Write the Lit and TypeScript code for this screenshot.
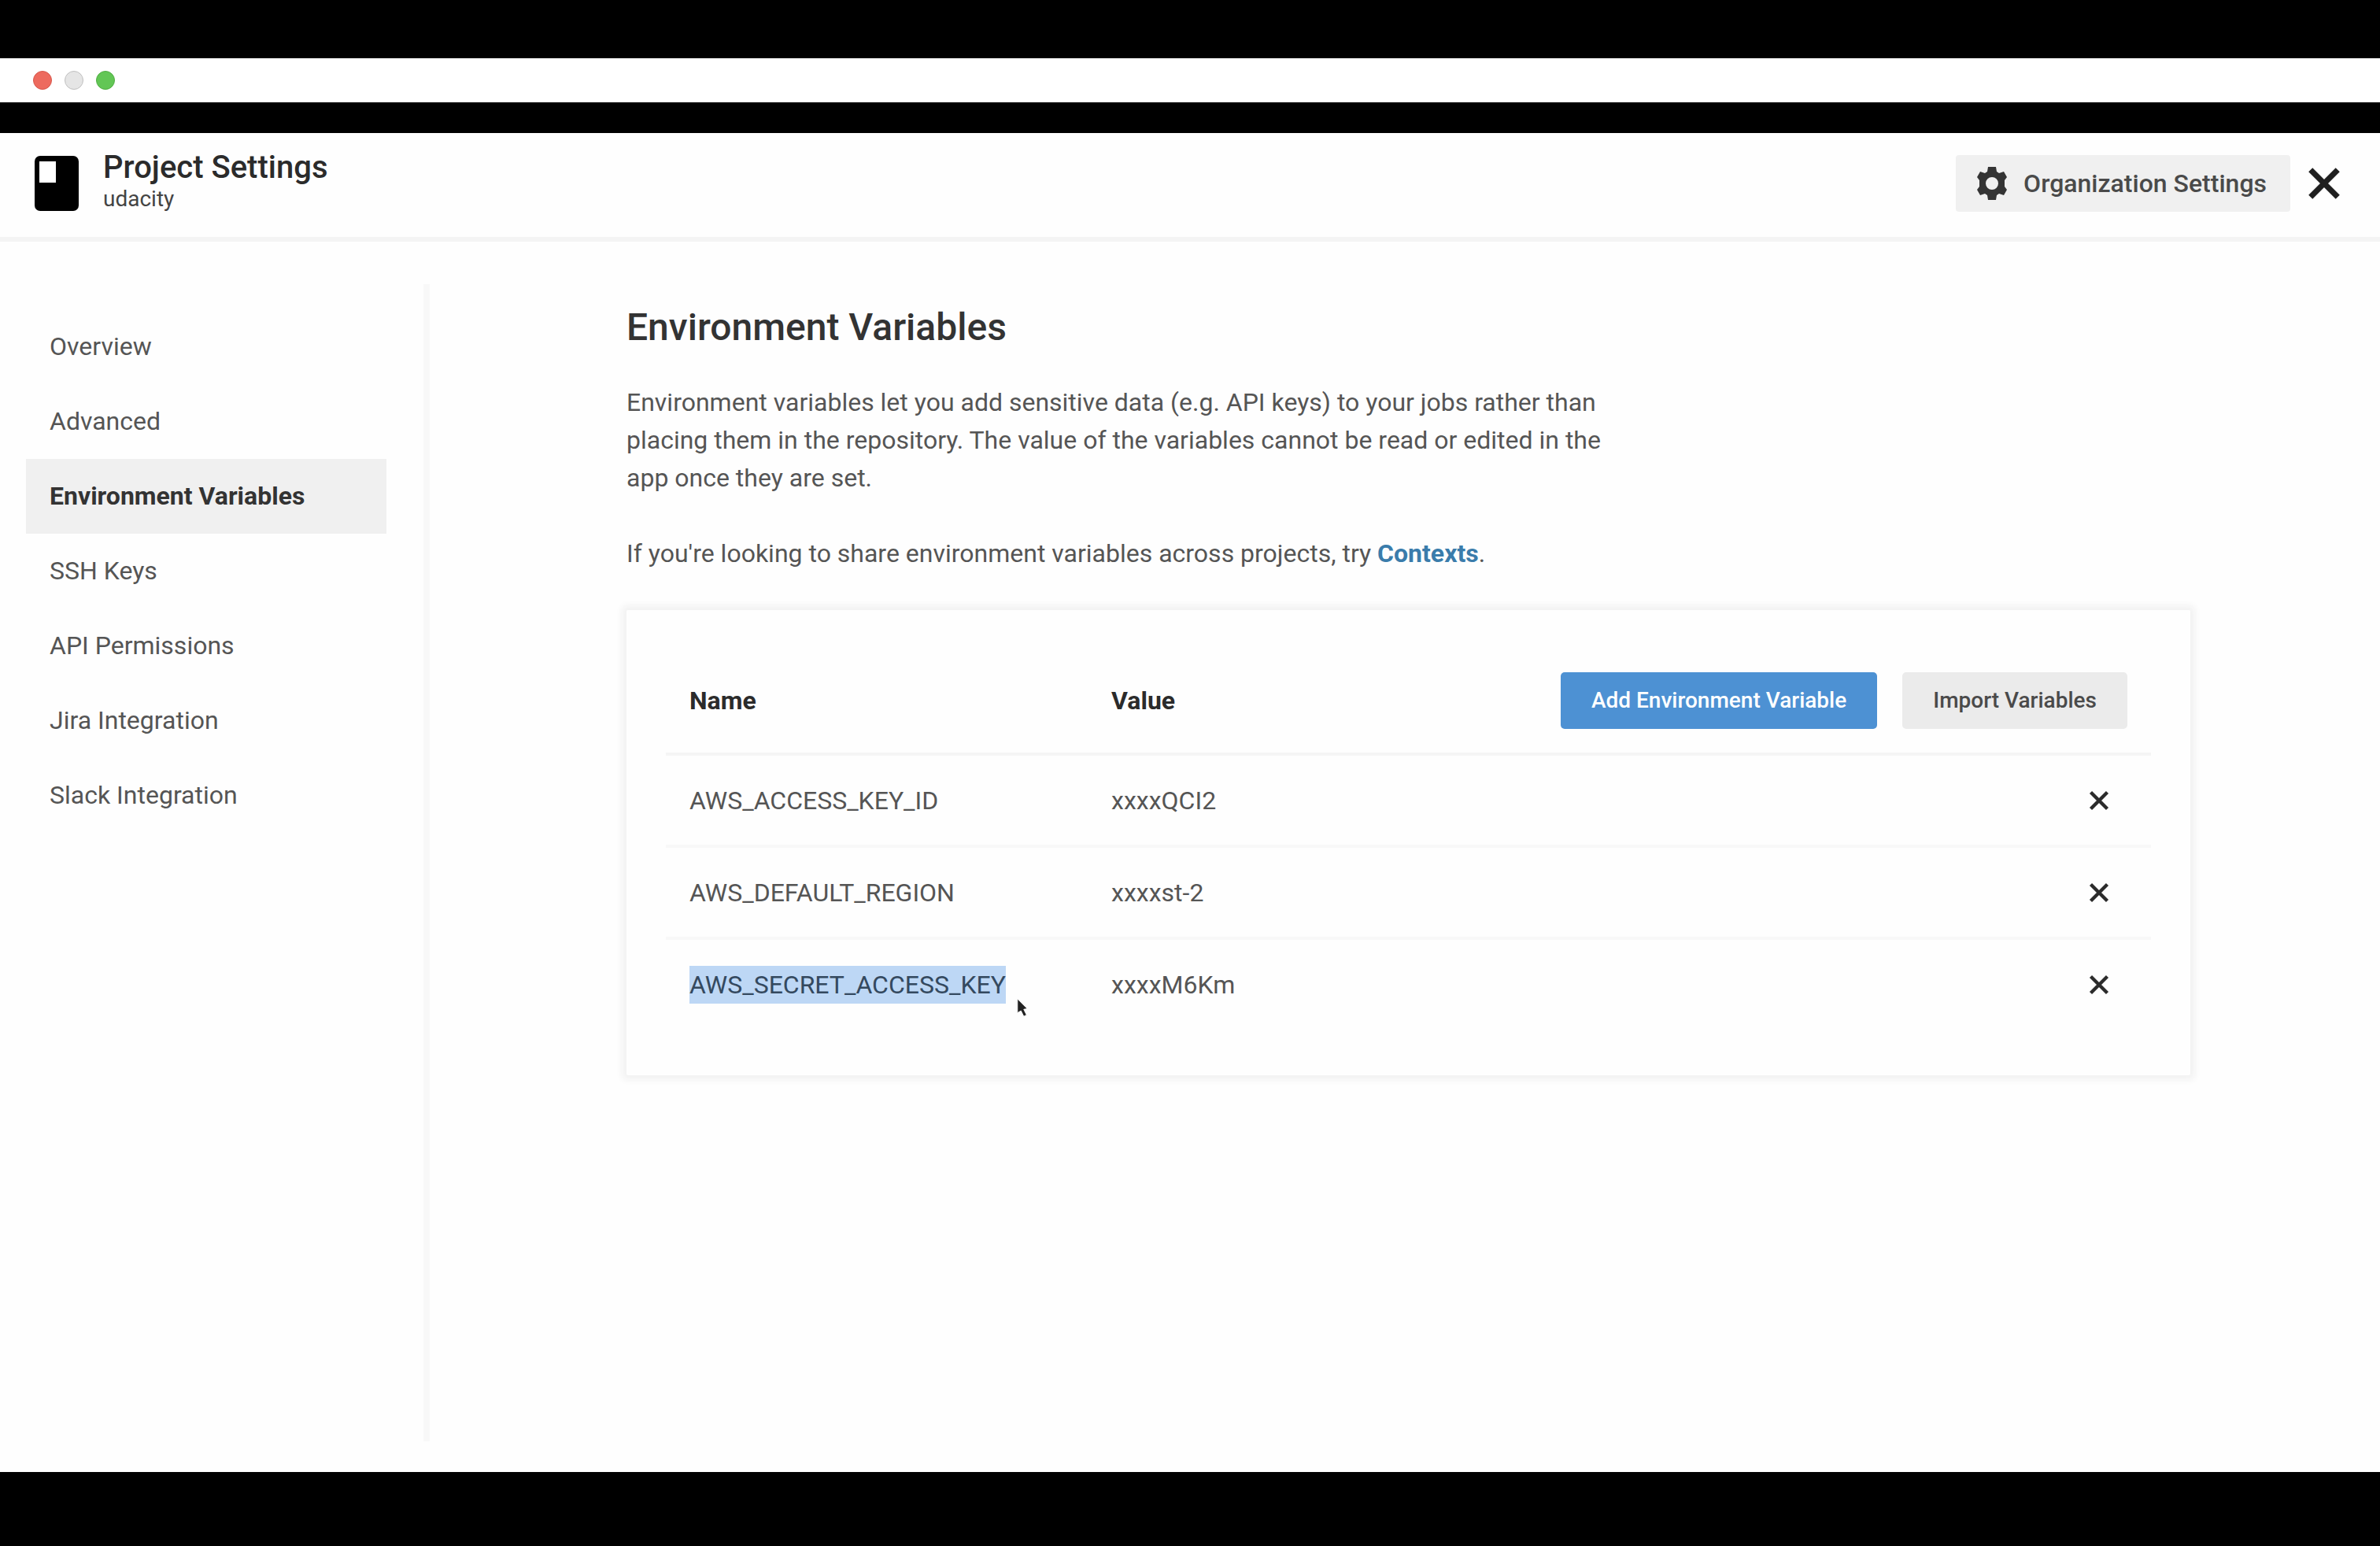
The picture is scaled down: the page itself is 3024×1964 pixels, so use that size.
import { LitElement, html, css, svg } from 'lit';
import { customElement, property, state } from 'lit/decorators.js';
import { classMap } from 'lit/directives/class-map.js';

interface EnvVariable {
  name: string;
  value: string;
  selected?: boolean;
}

const crossIcon = svg`<path d="M4 4 L28 28 M28 4 L4 28" fill="none" stroke="currentColor" stroke-width="5"></path>`;

@customElement('window-bar')
class WindowBar extends LitElement {
  static styles = css`
    :host {
      display: flex;
      align-items: center;
      gap: 16px;
      height: 56px;
      padding-left: 42px;
      background: #ffffff;
    }
    .light {
      box-sizing: border-box;
      width: 24px;
      height: 24px;
      padding: 0;
      border: 1px solid;
      border-radius: 50%;
    }
    .close {
      background: #ed6a5e;
      border-color: #d8574c;
    }
    .minimize {
      background: #e5e5e5;
      border-color: #c0c0c0;
    }
    .zoom {
      background: #62c655;
      border-color: #4fae42;
    }
  `;

  render() {
    return html`
      <button class="light close" aria-label="Close"></button>
      <button class="light minimize" aria-label="Minimize"></button>
      <button class="light zoom" aria-label="Zoom"></button>
    `;
  }
}

@customElement('settings-header')
class SettingsHeader extends LitElement {
  static styles = css`
    :host {
      display: flex;
      align-items: center;
      padding: 16px 48px 20px 44px;
      border-bottom: 6px solid #f4f4f4;
    }
    .book {
      display: block;
      width: 56px;
      height: 70px;
    }
    .titles {
      flex: 1;
      padding: 4px 0 12px 31px;
    }
    h1,
    p {
      margin: 0;
    }
    h1 {
      font-size: 40px;
      line-height: 48px;
      font-weight: 500;
      color: #2b2b2b;
    }
    p {
      font-size: 28px;
      line-height: 32px;
      color: #444444;
    }
    .org {
      display: flex;
      align-items: center;
      gap: 20px;
      height: 72px;
      padding: 0 30px 0 26px;
      border: 0;
      border-radius: 4px;
      background: #f0f0f0;
      color: #4a4a4a;
      font: inherit;
      font-size: 32px;
      font-weight: 500;
    }
    .gear {
      width: 40px;
      height: 44px;
      color: #343434;
    }
    .dismiss {
      display: block;
      margin-left: 20px;
      padding: 0;
      border: 0;
      background: none;
      color: #1f1f1f;
    }
    .dismiss svg {
      display: block;
      width: 46px;
      height: 46px;
    }
  `;

  render() {
    return html`
      <svg class="book" viewBox="0 0 56 70" aria-hidden="true">
        <rect width="56" height="70" rx="7" fill="#000000"></rect>
        <path d="M6 7 H27 V34 H6 Z" fill="#ffffff"></path>
      </svg>
      <div class="titles">
        <h1>Project Settings</h1>
        <p>udacity</p>
      </div>
      <button class="org">
        <svg class="gear" viewBox="0 0 40 44" aria-hidden="true">
          <path
            fill="currentColor"
            fill-rule="evenodd"
            d="M15 1 H25 L26 7 L29 9 L35 7 L39 14 L36 18 V26 L39 30 L35 37 L29 35 L26 37 L25 43 H15 L14 37 L11 35 L5 37 L1 30 L4 26 V18 L1 14 L5 7 L11 9 L14 7 Z M20 14 A8 8 0 1 0 20 30 A8 8 0 1 0 20 14 Z"
          ></path>
        </svg>
        Organization Settings
      </button>
      <button class="dismiss" aria-label="Close settings">
        <svg viewBox="0 0 32 32">${crossIcon}</svg>
      </button>
    `;
  }
}

@customElement('settings-nav')
class SettingsNav extends LitElement {
  static styles = css`
    :host {
      display: block;
      padding: 32px 47px 0 33px;
      border-right: 8px solid #f8f8f8;
    }
    ul {
      margin: 0;
      padding: 0;
      list-style: none;
    }
    a {
      display: block;
      width: 428px;
      padding-left: 30px;
      font-size: 32px;
      line-height: 95px;
      color: #555555;
      text-decoration: none;
    }
    .active {
      background: #f0f0f0;
      color: #333333;
      font-weight: 700;
    }
  `;

  @property({ attribute: false }) items: string[] = [];
  @property() current = '';

  render() {
    return html`
      <nav aria-label="Project settings">
        <ul>
          ${this.items.map(
            (item) => html`<li>
              <a href="#" class=${classMap({ active: item === this.current })}>${item}</a>
            </li>`,
          )}
        </ul>
      </nav>
    `;
  }
}

@customElement('variables-card')
class VariablesCard extends LitElement {
  static styles = css`
    :host {
      display: block;
      padding: 48px 50px 55px;
      border-radius: 2px;
      box-shadow: 0 0 8px 6px #f2f2f2;
    }
    table {
      width: 100%;
      border-collapse: separate;
      border-spacing: 0;
      table-layout: fixed;
      font-size: 32px;
      line-height: 48px;
      color: #555555;
    }
    th,
    td {
      box-sizing: border-box;
      height: 117px;
      padding: 0;
      border-bottom: 4px solid #f8f8f8;
      text-align: left;
      vertical-align: middle;
    }
    th {
      height: 137px;
      border-color: #f5f5f5;
      color: #2b2b2b;
      font-weight: 700;
    }
    tbody tr:last-child td {
      border-color: transparent;
    }
    .name {
      width: 30%;
      padding-left: 30px;
    }
    .value {
      width: 25%;
    }
    .actions {
      padding-right: 30px;
    }
    .buttons {
      display: flex;
      justify-content: flex-end;
      gap: 32px;
    }
    .button {
      height: 72px;
      padding: 0 39px;
      border: 0;
      border-radius: 5px;
      background: #ebebeb;
      color: #4a4a4a;
      font: inherit;
      font-size: 28px;
      font-weight: 500;
      white-space: nowrap;
    }
    .primary {
      background: #4d91d3;
      color: #ffffff;
    }
    .remove {
      display: grid;
      place-items: center;
      width: 72px;
      height: 72px;
      margin-left: auto;
      padding: 0;
      border: 0;
      background: none;
      color: #2b2b2b;
    }
    .remove svg {
      display: block;
      width: 28px;
      height: 28px;
    }
    mark {
      position: relative;
      display: inline-block;
      background: #bdd7f5;
      color: #34495f;
    }
    .cursor {
      position: absolute;
      left: 100%;
      top: 100%;
      width: 16px;
      height: 25px;
      margin: -7px 0 0 13px;
    }
  `;

  @property({ attribute: false }) variables: EnvVariable[] = [];

  private renderName(variable: EnvVariable) {
    if (!variable.selected) return variable.name;
    return html`<mark
      >${variable.name}<svg class="cursor" viewBox="0 0 18 28" aria-hidden="true">
        <path
          d="M2 1 L16 15 L11 16 L15 24 L11 26 L7 18 L2 21 Z"
          fill="#222222"
          stroke="#ffffff"
          stroke-width="1"
        ></path></svg
    ></mark>`;
  }

  render() {
    return html`
      <table>
        <thead>
          <tr>
            <th class="name" scope="col">Name</th>
            <th class="value" scope="col">Value</th>
            <th class="actions">
              <div class="buttons">
                <button class="button primary">Add Environment Variable</button>
                <button class="button">Import Variables</button>
              </div>
            </th>
          </tr>
        </thead>
        <tbody>
          ${this.variables.map(
            (variable) => html`<tr>
              <td class="name">${this.renderName(variable)}</td>
              <td class="value">${variable.value}</td>
              <td class="actions">
                <button class="remove" aria-label="Remove ${variable.name}">
                  <svg viewBox="0 0 32 32">${crossIcon}</svg>
                </button>
              </td>
            </tr>`,
          )}
        </tbody>
      </table>
    `;
  }
}

@customElement('app-root')
class AppRoot extends LitElement {
  static styles = css`
    :host {
      display: flex;
      flex-direction: column;
      box-sizing: border-box;
      min-height: 100vh;
      padding: 74px 0 94px;
      background: #000000;
      font-family: Roboto, 'Liberation Sans', sans-serif;
    }
    .page {
      flex: 1;
      display: flex;
      flex-direction: column;
      margin-top: 39px;
      background: #fefefe;
    }
    .body {
      flex: 1;
      display: flex;
      padding: 54px 0 39px;
    }
    main {
      flex: 1;
      min-width: 0;
      padding: 27px 241px 0 250px;
    }
    h2,
    p {
      margin: 0;
    }
    h2 {
      margin-bottom: 43px;
      font-size: 48px;
      line-height: 56px;
      font-weight: 500;
      color: #333333;
    }
    p {
      max-width: 1260px;
      margin-bottom: 48px;
      font-size: 32px;
      line-height: 48px;
      color: #555555;
    }
    a {
      color: #3a7cab;
      font-weight: 700;
      text-decoration: none;
    }
  `;

  @state() private sections = [
    'Overview',
    'Advanced',
    'Environment Variables',
    'SSH Keys',
    'API Permissions',
    'Jira Integration',
    'Slack Integration',
  ];

  @state() private variables: EnvVariable[] = [
    { name: 'AWS_ACCESS_KEY_ID', value: 'xxxxQCI2' },
    { name: 'AWS_DEFAULT_REGION', value: 'xxxxst-2' },
    { name: 'AWS_SECRET_ACCESS_KEY', value: 'xxxxM6Km', selected: true },
  ];

  render() {
    return html`
      <window-bar></window-bar>
      <div class="page">
        <settings-header></settings-header>
        <div class="body">
          <settings-nav .items=${this.sections} current="Environment Variables"></settings-nav>
          <main>
            <h2>Environment Variables</h2>
            <p>
              Environment variables let you add sensitive data (e.g. API keys) to your jobs rather
              than placing them in the repository. The value of the variables cannot be read or
              edited in the app once they are set.
            </p>
            <p>
              If you're looking to share environment variables across projects, try
              <a href="#">Contexts</a>.
            </p>
            <variables-card .variables=${this.variables}></variables-card>
          </main>
        </div>
      </div>
    `;
  }
}
